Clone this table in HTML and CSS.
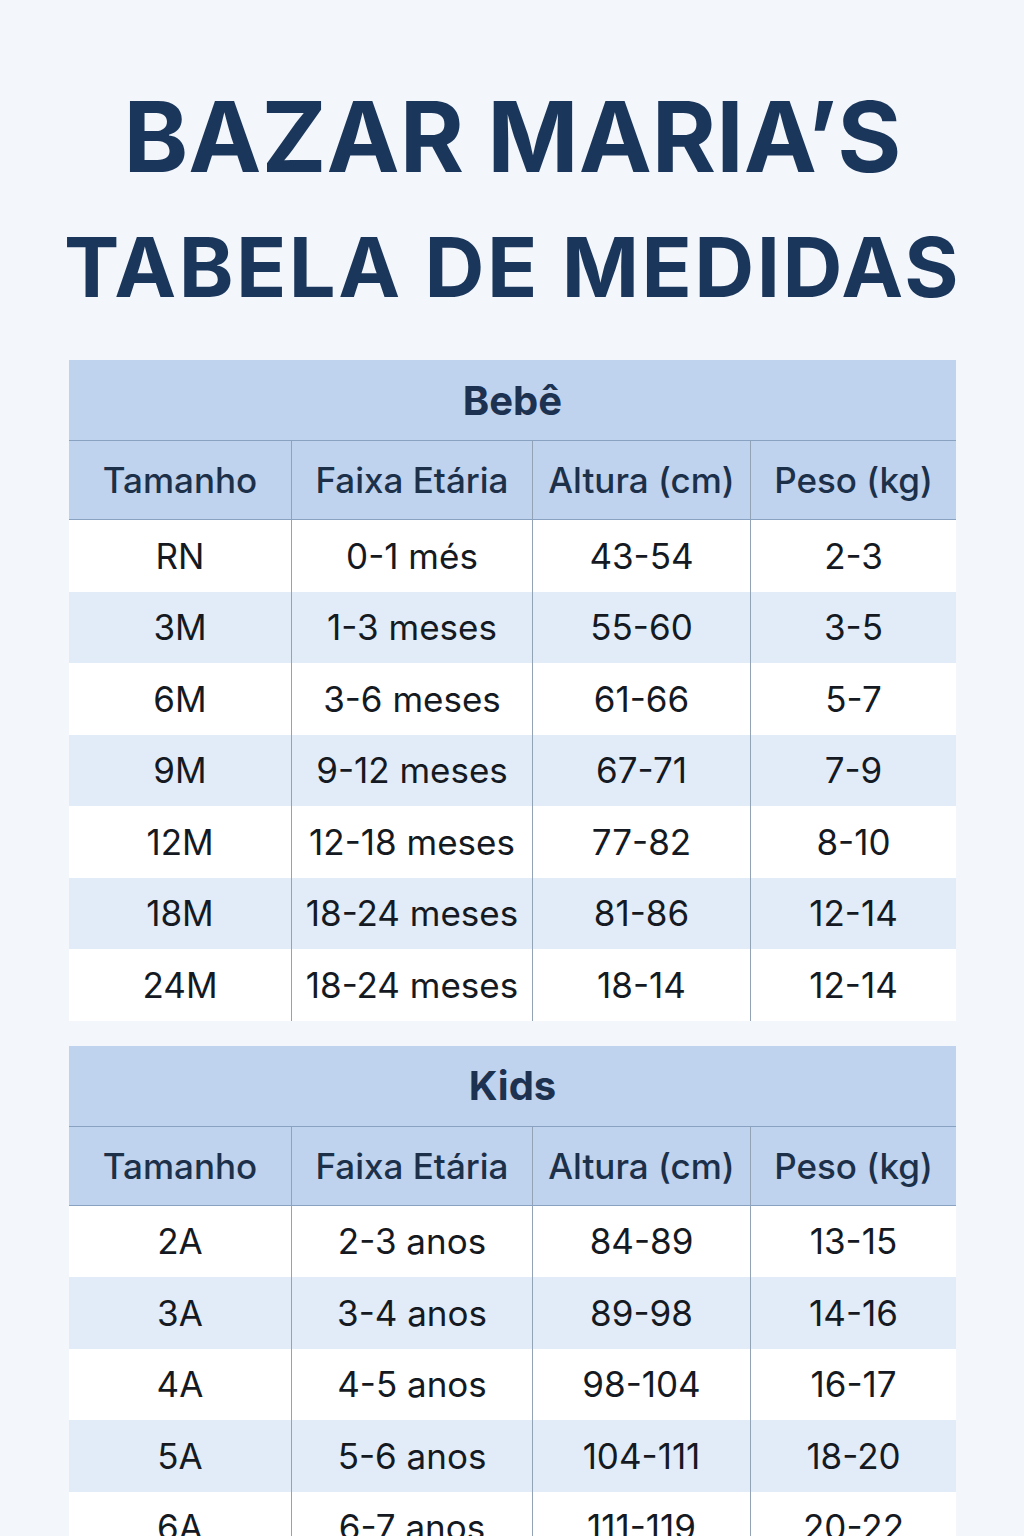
FILE: index.html
```html
<!DOCTYPE html>
<html lang="pt-BR">
<head>
<meta charset="utf-8">
<title>Bazar Maria's – Tabela de Medidas</title>
<link rel="stylesheet" href="styles.css">
</head>
<body>
<main class="page">
  <h1 class="title">
    <span class="title-line title-line--big">BAZAR MARIA’S</span>
    <span class="title-line title-line--small">TABELA DE MEDIDAS</span>
  </h1>

  <section class="size-table">
    <div class="table-title">Bebê</div>
    <div class="row row--head">
      <div class="cell">Tamanho</div><div class="cell">Faixa Etária</div><div class="cell">Altura (cm)</div><div class="cell">Peso (kg)</div>
    </div>
    <div class="row"><div class="cell">RN</div><div class="cell">0-1 més</div><div class="cell">43-54</div><div class="cell">2-3</div></div>
    <div class="row row--alt"><div class="cell">3M</div><div class="cell">1-3 meses</div><div class="cell">55-60</div><div class="cell">3-5</div></div>
    <div class="row"><div class="cell">6M</div><div class="cell">3-6 meses</div><div class="cell">61-66</div><div class="cell">5-7</div></div>
    <div class="row row--alt"><div class="cell">9M</div><div class="cell">9-12 meses</div><div class="cell">67-71</div><div class="cell">7-9</div></div>
    <div class="row"><div class="cell">12M</div><div class="cell">12-18 meses</div><div class="cell">77-82</div><div class="cell">8-10</div></div>
    <div class="row row--alt"><div class="cell">18M</div><div class="cell">18-24 meses</div><div class="cell">81-86</div><div class="cell">12-14</div></div>
    <div class="row"><div class="cell">24M</div><div class="cell">18-24 meses</div><div class="cell">18-14</div><div class="cell">12-14</div></div>
  </section>

  <section class="size-table">
    <div class="table-title">Kids</div>
    <div class="row row--head">
      <div class="cell">Tamanho</div><div class="cell">Faixa Etária</div><div class="cell">Altura (cm)</div><div class="cell">Peso (kg)</div>
    </div>
    <div class="row"><div class="cell">2A</div><div class="cell">2-3 anos</div><div class="cell">84-89</div><div class="cell">13-15</div></div>
    <div class="row row--alt"><div class="cell">3A</div><div class="cell">3-4 anos</div><div class="cell">89-98</div><div class="cell">14-16</div></div>
    <div class="row"><div class="cell">4A</div><div class="cell">4-5 anos</div><div class="cell">98-104</div><div class="cell">16-17</div></div>
    <div class="row row--alt"><div class="cell">5A</div><div class="cell">5-6 anos</div><div class="cell">104-111</div><div class="cell">18-20</div></div>
    <div class="row"><div class="cell">6A</div><div class="cell">6-7 anos</div><div class="cell">111-119</div><div class="cell">20-22</div></div>
  </section>
</main>
</body>
</html>
```

FILE: styles.css
```css
* { box-sizing: border-box; }

html, body {
  margin: 0;
  padding: 0;
  background: #f3f7fc;
}

body {
  font-family: Inter, "Noto Sans", "Liberation Sans", sans-serif;
  color: #151a22;
}

.page {
  width: 1024px;
  min-height: 1536px;
  padding: 88px 68px 0 69px;
  overflow: hidden;
}

.title {
  margin: 0;
  display: flex;
  flex-direction: column;
  align-items: center;
  color: #1b365b;
  font-weight: 700;
}

.title-line {
  display: block;
  white-space: nowrap;
}

.title-line--big {
  font-size: 98px;
  line-height: 98px;
  letter-spacing: 0px;
}

.title-line--small {
  margin-top: 40px;
  font-size: 83px;
  line-height: 83px;
  letter-spacing: 2.4px;
}

.size-table {
  margin-top: 51px;
  width: 887px;
  background: #ffffff;
}

.size-table + .size-table {
  margin-top: 25px;
}

.table-title {
  height: 81px;
  display: flex;
  align-items: center;
  justify-content: center;
  background: #bfd3ee;
  border-bottom: 1px solid #8aa2c2;
  font-size: 40px;
  font-weight: 700;
  color: #1d3250;
}

.row {
  display: grid;
  grid-template-columns: 222px 241px 218px 206px;
  height: 71.5px;
  background: #ffffff;
}

.row--alt {
  background: #e2ecf9;
}

.row--head {
  height: 79px;
  background: #bfd3ee;
  border-bottom: 1px solid #8aa2c2;
}

.cell {
  display: flex;
  align-items: center;
  justify-content: center;
  border-left: 1px solid #93a3b6;
  font-size: 35px;
  font-weight: 400;
  white-space: nowrap;
}

.cell:first-child {
  border-left: none;
}

.row--head .cell {
  font-size: 35px;
  font-weight: 500;
  color: #1d3049;
}
```
